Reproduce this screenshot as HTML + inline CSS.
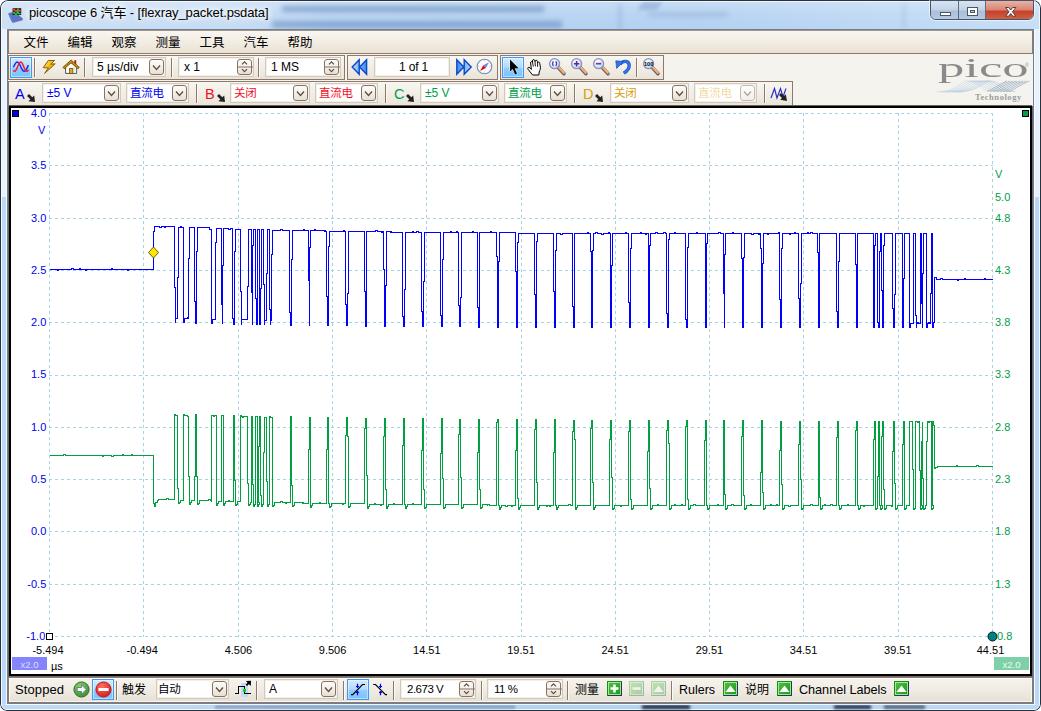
<!DOCTYPE html><html><head><meta charset="utf-8"><title>picoscope 6 汽车 - [flexray_packet.psdata]</title><style>
*{box-sizing:border-box;margin:0;padding:0}
html,body{width:1041px;height:711px;overflow:hidden;background:#fff}
body{font-family:"Liberation Sans","Noto Sans CJK SC",sans-serif;font-size:12px;color:#000;position:relative}
.abs{position:absolute}
#win{position:absolute;left:0;top:0;width:1041px;height:711px;box-shadow:inset 0 0 0 1px #27323f;border-radius:8px 8px 7px 7px;
 background:linear-gradient(180deg,rgba(255,255,255,.28) 0px,rgba(255,255,255,.08) 14px,rgba(255,255,255,0) 29px),linear-gradient(90deg,#cbdff5 0px,#c6dcf4 240px,#b6d3f2 330px,#b3d1f1 700px,#bcd7f4 860px,#c6def7 1041px);overflow:hidden}
#win:before{content:"";position:absolute;left:1px;top:1px;right:1px;bottom:1px;border:1px solid rgba(255,255,255,.75);border-radius:7px 7px 6px 6px}
#title{position:absolute;left:29px;top:4px;height:18px;line-height:18px;font-size:13px;letter-spacing:-.12px;white-space:nowrap;color:#000;
 text-shadow:0 0 6px #fff,0 0 6px #fff,0 0 9px #fff}
#client{position:absolute;left:7px;top:29px;width:1027px;height:675px;background:#f5f3ee;border:1px solid #6f7f93}
.menu{position:absolute;left:8px;top:30px;width:1025px;height:24px;background:linear-gradient(#f9f6f0,#f2ede3 50%,#e9e1d3);border:1px solid #917a6c;border-top-color:#a59586}
.mi{position:absolute;top:35px;height:16px;line-height:16px;font-size:12.5px;white-space:nowrap}
.grp{position:absolute;border:1px solid #8f786a;background:linear-gradient(#f8f6f1,#f1ede5 55%,#e9e4d8)}
.sep{position:absolute;width:2px;border-left:1px solid #8f786a;border-right:1px solid #fbfaf7}
.box{position:absolute;background:#fff;border:1px solid #d2cbbd;box-shadow:inset 0 0 0 1px #f3f0ea}
.txt{position:absolute;white-space:nowrap;font-size:12px;line-height:14px;height:14px}
.dd{position:absolute;border:1px solid #8a7263;border-radius:3px;background:linear-gradient(#fdfcfa,#f3efe8 50%,#e6e0d4)}
.dd svg{position:absolute;left:0;top:0}
.hl{position:absolute;border:1px solid #3d9bf5;box-shadow:inset 0 0 0 1px rgba(255,255,255,.45);background:linear-gradient(#d2eaff,#b2dbfd 48%,#8fcbfc 56%,#7fc1fa)}
.ic{position:absolute;overflow:visible}
.ax{position:absolute;white-space:nowrap;font-size:11px;line-height:12px;height:12px}
.axl{color:#0000f0;text-align:right;width:40px;left:6.3px}
.axr{color:#00a048;left:995px}
.axt{color:#000;text-align:center;width:60px}
</style></head><body><div id="win"><div class="abs" style="left:282px;top:6px;width:262px;height:6px;background:rgba(60,100,165,.42);filter:blur(2.5px)"></div><div class="abs" style="left:272px;top:21px;width:290px;height:7px;background:rgba(60,100,165,.40);filter:blur(2.5px)"></div><div class="abs" style="left:618px;top:3px;width:4px;height:26px;background:rgba(80,120,175,.18);filter:blur(2px)"></div><div class="abs" style="left:648px;top:12px;width:80px;height:5px;background:rgba(80,120,175,.2);filter:blur(2.5px)"></div><div class="abs" style="left:640px;top:2px;width:20px;height:8px;background:rgba(60,100,160,.25);filter:blur(2px);transform:skewX(-30deg)"></div><div class="abs" style="left:902px;top:3px;width:4px;height:26px;background:rgba(80,120,175,.12);filter:blur(2px)"></div><svg class="ic" style="left:7px;top:7px" width="18" height="18" viewBox="0 0 18 18"><path d="M1.5 6.5 L7.5 5 L15.5 11.5 L15.3 13 L6 15.5 L5.2 15 Z" fill="#5f74c4" stroke="#5a6aa8" stroke-width=".6"/><path d="M1.5 6.5 L2 8 L5.4 15.3 L6 14 Z" fill="#3f8fe0"/><rect x="5.6" y="1.2" width="8.6" height="6.8" fill="#111"/><path d="M6 3.4 q1-2 2 0 t2 0 t2-.3 t1.8 0" stroke="#f04040" stroke-width="1.6" fill="none"/><path d="M6 6.6 q1-2.4 2 0 t2-.4 l.8-2.5 l.6 2.6 q1 1 2.2-.4" stroke="#20c040" stroke-width="1.6" fill="none"/></svg><div id="title">picoscope 6 汽车 - [flexray_packet.psdata]</div><div class="abs" style="left:930px;top:0px;width:104px;height:20px;border:1px solid #44546a;border-radius:0 0 6px 6px;overflow:hidden;box-shadow:0 0 0 1px rgba(255,255,255,.55)"><div class="abs" style="left:0;top:0;width:28px;height:20px;background:linear-gradient(#d8e4f1,#c3d3e6 45%,#a9bfd8 50%,#b9cde3);border-right:1px solid #5b6b80"></div><div class="abs" style="left:28px;top:0;width:27px;height:20px;background:linear-gradient(#d8e4f1,#c3d3e6 45%,#a9bfd8 50%,#b9cde3);border-right:1px solid #5b6b80"></div><div class="abs" style="left:55px;top:0;width:48px;height:20px;background:linear-gradient(#eab2a4,#d98471 45%,#c6402b 50%,#cf5a3e 85%,#d97b5c)"></div><svg class="ic" style="left:0;top:0" width="104" height="21" viewBox="0 0 104 21"><rect x="9.5" y="11.5" width="10" height="3" fill="#fff" stroke="#4b5563" stroke-width="1"/><rect x="36.5" y="6.5" width="10" height="8" fill="#fff" stroke="#4b5563" stroke-width="1"/><rect x="39.5" y="9.5" width="4" height="2" fill="#b7c7da" stroke="#4b5563" stroke-width="1"/><path d="M74.5 6.5 h3.2 l2 2.6 l2-2.6 h3.2 l-3.5 4.3 l3.5 4.4 h-3.2 l-2-2.7 l-2 2.7 h-3.2 l3.5-4.4 Z" fill="#fff" stroke="#5a3a36" stroke-width="1"/></svg></div><div class="abs" style="left:2px;top:705px;width:1037px;height:4px;background:rgba(176,214,250,.5);border-radius:0 0 5px 5px"></div><div class="abs" style="left:215px;top:705px;width:300px;height:4px;background:rgba(95,125,170,.5);filter:blur(1.2px)"></div><div class="abs" style="left:642px;top:705px;width:48px;height:4px;background:rgba(12,24,52,.9);filter:blur(1.5px)"></div><div class="abs" style="left:834px;top:705px;width:37px;height:4px;background:rgba(16,34,70,.9);filter:blur(1.5px)"></div><div class="abs" style="left:884px;top:705px;width:41px;height:4px;background:rgba(55,72,100,.8);filter:blur(1.5px)"></div><div class="abs" style="left:2px;top:29px;width:4px;height:168px;background:rgba(255,255,255,.6)"></div><div class="abs" style="left:1035px;top:29px;width:4px;height:168px;background:rgba(255,255,255,.6)"></div><div class="abs" style="left:2px;top:197px;width:4px;height:507px;background:rgba(176,214,250,.55)"></div><div class="abs" style="left:1035px;top:197px;width:4px;height:507px;background:rgba(176,214,250,.55)"></div><div class="abs" style="left:6px;top:29px;width:1px;height:675px;background:rgba(255,255,255,.85)"></div><div class="abs" style="left:1034px;top:29px;width:1px;height:675px;background:rgba(255,255,255,.85)"></div><div id="client"></div><div class="menu"></div><div class="mi" style="left:23.5px">文件</div><div class="mi" style="left:67.5px">编辑</div><div class="mi" style="left:111.5px">观察</div><div class="mi" style="left:155.5px">测量</div><div class="mi" style="left:199.5px">工具</div><div class="mi" style="left:243.5px">汽车</div><div class="mi" style="left:287.5px">帮助</div><div class="grp" style="left:8px;top:55px;width:337px;height:25px"></div><div class="grp" style="left:347px;top:55px;width:151px;height:25px"></div><div class="grp" style="left:500px;top:55px;width:164px;height:25px"></div><div class="hl" style="left:10px;top:57px;width:22px;height:21px"></div><svg class="ic" style="left:12px;top:59px" width="18" height="17" viewBox="0 0 18 17"><polyline points="1.4,8.3 2.0,7.0 2.6,5.8 3.2,4.8 3.8,3.9 4.4,3.3 5.0,3.0 5.6,3.1 6.2,3.5 6.8,4.1 7.4,5.1 8.0,6.2 8.6,7.4 9.2,8.7 9.8,9.9 10.4,10.9 11.0,11.6 11.6,12.1 12.2,12.3 12.8,12.1 13.4,11.6 14.0,10.9 14.6,9.9 15.2,8.7 15.8,7.4 16.4,6.2" fill="none" stroke="#2828f0" stroke-width="1.5"/><polyline points="1.4,11.4 2.0,12.1 2.6,12.3 3.2,12.1 3.8,11.4 4.4,10.4 5.0,9.2 5.6,7.8 6.2,6.4 6.8,5.1 7.4,4.0 8.0,3.3 8.6,3.0 9.2,3.2 9.8,3.7 10.4,4.7 11.0,5.9 11.6,7.3 12.2,8.7 12.8,10.0 13.4,11.1 14.0,11.9 14.6,12.3 15.2,12.2 15.8,11.7 16.4,10.8" fill="none" stroke="#f02030" stroke-width="1.5"/></svg><div class="sep" style="left:34px;top:58px;height:19px"></div><svg class="ic" style="left:42px;top:59px" width="14" height="17" viewBox="0 0 14 17"><defs><linearGradient id="gl" x1="0" y1="0" x2="1" y2="1"><stop offset="0" stop-color="#fff080"/><stop offset=".5" stop-color="#f0b810"/><stop offset="1" stop-color="#b87800"/></linearGradient></defs><path d="M6.2 1.6 L12.6 1.4 L8.6 5.2 L13.2 4.8 L2.6 14.4 L6.4 8.9 L1.2 8.7 Z" fill="url(#gl)" stroke="#8a5c00" stroke-width="1"/></svg><svg class="ic" style="left:62px;top:58px" width="19" height="18" viewBox="0 0 19 18"><rect x="12.3" y="2.2" width="1.9" height="4.5" fill="#c01818"/><path d="M3.6 9 V15.4 H14.6 V9 L9.1 4.2 Z" fill="#fdfdf6" stroke="#3a4050" stroke-width=".9"/><path d="M11 9 V15 H14.2 V9 Z" fill="#d4f0e4" opacity=".7"/><path d="M1.3 10.3 L9.1 3.4 L16.9 10.3" fill="none" stroke="#7a5408" stroke-width="2.7" stroke-linejoin="miter"/><path d="M1.6 9.9 L9.1 3.3 L16.6 9.9" fill="none" stroke="#e8b828" stroke-width="1.2" stroke-dasharray="1.2 .6"/><rect x="7.4" y="10.4" width="3.4" height="5" fill="#e0a828" stroke="#7a5408" stroke-width=".8"/></svg><div class="sep" style="left:84px;top:58px;height:19px"></div><div class="box" style="left:92px;top:57px;width:74px;height:20px"></div><div class="txt" style="left:97px;top:60px;color:#000;font-size:12px">5 µs/div</div><div class="dd" style="left:149px;top:59px;width:15px;height:16px"><svg width="15" height="16" viewBox="0 0 15 16"><path d="M3.0 5.5 l3.5 4 l3.5 -4" fill="none" stroke="#5e4c40" stroke-width="1.3"/></svg></div><div class="sep" style="left:171px;top:58px;height:19px"></div><div class="box" style="left:178px;top:57px;width:76px;height:20px"></div><div class="txt" style="left:184px;top:60px;">x 1</div><div class="dd" style="left:237px;top:59px;width:15px;height:16px"><svg width="15" height="16" viewBox="0 0 15 16"><line x1="0" y1="7.0" x2="15" y2="7.0" stroke="#8a7263" stroke-width="1"/><path d="M4 4.3 l2.5 -2.5 l2.5 2.5 M4 9.2 l2.5 2.5 l2.5 -2.5" fill="none" stroke="#5e4c40" stroke-width="1.2"/></svg></div><div class="sep" style="left:258px;top:58px;height:19px"></div><div class="box" style="left:265px;top:57px;width:76px;height:20px"></div><div class="txt" style="left:271px;top:60px;">1 MS</div><div class="dd" style="left:324px;top:59px;width:15px;height:16px"><svg width="15" height="16" viewBox="0 0 15 16"><line x1="0" y1="7.0" x2="15" y2="7.0" stroke="#8a7263" stroke-width="1"/><path d="M4 4.3 l2.5 -2.5 l2.5 2.5 M4 9.2 l2.5 2.5 l2.5 -2.5" fill="none" stroke="#5e4c40" stroke-width="1.2"/></svg></div><svg class="ic" style="left:351px;top:58px" width="18" height="18" viewBox="0 0 18 18"><defs><linearGradient id="gb" x1="0" x2="1"><stop offset="0" stop-color="#b4dcff"/><stop offset="1" stop-color="#3a8cf0"/></linearGradient></defs><path d="M8.2 1.8 V16.2 L1.2 9 Z M15.6 1.8 V16.2 L8.6 9 Z" fill="url(#gb)" stroke="#0a48c8" stroke-width="1.4"/></svg><div class="box" style="left:374px;top:57px;width:76px;height:20px"></div><div class="txt" style="left:374px;top:60px;width:76px;text-align:center;padding-left:3px;letter-spacing:-.2px">1 of 1</div><svg class="ic" style="left:455px;top:58px" width="18" height="18" viewBox="0 0 18 18"><defs><linearGradient id="gb2" x1="1" x2="0"><stop offset="0" stop-color="#b4dcff"/><stop offset="1" stop-color="#3a8cf0"/></linearGradient></defs><path d="M1.8 1.8 V16.2 L8.8 9 Z M9.2 1.8 V16.2 L16.2 9 Z" fill="url(#gb2)" stroke="#0a48c8" stroke-width="1.4"/></svg><svg class="ic" style="left:476px;top:58px" width="18" height="18" viewBox="0 0 18 18"><circle cx="8.5" cy="8.5" r="7.3" fill="#fbfcfe" stroke="#7e8cac" stroke-width="1.1"/><path d="M8.5 2 v1.6 M8.5 13.4 v1.6 M2 8.5 h1.6 M13.4 8.5 h1.6" stroke="#c8ccd8" stroke-width=".8"/><path d="M13 4.2 L9.9 9.9 L7.3 7.3 Z" fill="#7c7cf8"/><path d="M4 13 L7.3 7.3 L9.9 9.9 Z" fill="#e80808"/></svg><div class="hl" style="left:502px;top:57px;width:22px;height:21px"></div><svg class="ic" style="left:507px;top:58px" width="14" height="19" viewBox="0 0 14 19"><path d="M3 1.6 V13.6 L5.8 11 L8.1 16.4 L10 15.5 L7.7 10.4 L11.6 10.2 Z" fill="#000" stroke="#fff" stroke-width=".7" paint-order="stroke"/></svg><svg class="ic" style="left:526px;top:58px" width="19" height="19" viewBox="0 0 19 19"><path d="M6.6 17 L2 11.2 C1 9.8,2.8 8.6,3.9 9.8 L5.4 11.4 L4.6 5 C4.4 3.3,6.3 3,6.6 4.6 L6.5 3 C6.3 1.2,8.5 1,8.8 2.7 L9 3.6 C9 1.8,11.3 1.8,11.4 3.6 L11.6 5 C11.7 3.6,13.6 3.7,13.7 5.2 L14.2 8 C14.8 10.5,14 12,13.2 14 L12.8 17 Z" fill="#fff" stroke="#000" stroke-width="1"/><path d="M6.6 4.6 L7.3 8.6 M9 3.6 L9.4 8.4 M11.6 5 L11.6 8.8" stroke="#000" stroke-width=".9" fill="none"/></svg><svg class="ic" style="left:548px;top:58px" width="18" height="18" viewBox="0 0 18 18"><defs><radialGradient id="lg" cx=".4" cy=".35" r=".75"><stop offset="0" stop-color="#ffffff"/><stop offset=".6" stop-color="#d4e6fa"/><stop offset="1" stop-color="#9cc0ee"/></radialGradient></defs><path d="M10 9.2 L16 15.7" stroke="#6a5c86" stroke-width="3.5" stroke-linecap="round"/><path d="M10.3 9 L15.8 15" stroke="#f4a648" stroke-width="1.9" stroke-linecap="round"/><path d="M10.7 8.7 L16 14.5" stroke="#fbd890" stroke-width=".7" stroke-linecap="round"/><circle cx="6.6" cy="5.7" r="5" fill="url(#lg)" stroke="#8e92ba" stroke-width="1.3"/><path d="M5.4 3.4 q-1.7 2.3 0 4.6 M7.8 3.4 q1.7 2.3 0 4.6" fill="none" stroke="#5838a8" stroke-width="1.2"/></svg><svg class="ic" style="left:570px;top:58px" width="18" height="18" viewBox="0 0 18 18"><defs><radialGradient id="lg" cx=".4" cy=".35" r=".75"><stop offset="0" stop-color="#ffffff"/><stop offset=".6" stop-color="#d4e6fa"/><stop offset="1" stop-color="#9cc0ee"/></radialGradient></defs><path d="M10 9.2 L16 15.7" stroke="#6a5c86" stroke-width="3.5" stroke-linecap="round"/><path d="M10.3 9 L15.8 15" stroke="#f4a648" stroke-width="1.9" stroke-linecap="round"/><path d="M10.7 8.7 L16 14.5" stroke="#fbd890" stroke-width=".7" stroke-linecap="round"/><circle cx="6.6" cy="5.7" r="5" fill="url(#lg)" stroke="#8e92ba" stroke-width="1.3"/><path d="M3.9 5.7 h5.4 M6.6 3 v5.4" stroke="#5828a0" stroke-width="1.6"/></svg><svg class="ic" style="left:592px;top:58px" width="18" height="18" viewBox="0 0 18 18"><defs><radialGradient id="lg" cx=".4" cy=".35" r=".75"><stop offset="0" stop-color="#ffffff"/><stop offset=".6" stop-color="#d4e6fa"/><stop offset="1" stop-color="#9cc0ee"/></radialGradient></defs><path d="M10 9.2 L16 15.7" stroke="#6a5c86" stroke-width="3.5" stroke-linecap="round"/><path d="M10.3 9 L15.8 15" stroke="#f4a648" stroke-width="1.9" stroke-linecap="round"/><path d="M10.7 8.7 L16 14.5" stroke="#fbd890" stroke-width=".7" stroke-linecap="round"/><circle cx="6.6" cy="5.7" r="5" fill="url(#lg)" stroke="#8e92ba" stroke-width="1.3"/><path d="M3.9 5.7 h5.4" stroke="#8030a0" stroke-width="1.7"/></svg><svg class="ic" style="left:614px;top:58px" width="18" height="18" viewBox="0 0 18 18"><path d="M6 6.4 C9 2.2,15 2.4,15.2 7.5 C15.3 11,12.5 13.5,9.8 15.2" fill="none" stroke="#1c4cc0" stroke-width="3.3"/><path d="M6 6.4 C9 2.2,15 2.4,15.2 7.5 C15.3 11,12.5 13.5,9.8 15.2" fill="none" stroke="#2f74ec" stroke-width="2.2"/><path d="M1.8 2.8 L9.6 3.6 L2.6 10.4 Z" fill="#2f74ec" stroke="#1c4cc0" stroke-width=".7"/></svg><div class="sep" style="left:636px;top:58px;height:19px"></div><svg class="ic" style="left:642px;top:58px" width="18" height="18" viewBox="0 0 18 18"><defs><radialGradient id="lg" cx=".4" cy=".35" r=".75"><stop offset="0" stop-color="#ffffff"/><stop offset=".6" stop-color="#d4e6fa"/><stop offset="1" stop-color="#9cc0ee"/></radialGradient></defs><path d="M10 9.2 L16 15.7" stroke="#6a5c86" stroke-width="3.5" stroke-linecap="round"/><path d="M10.3 9 L15.8 15" stroke="#f4a648" stroke-width="1.9" stroke-linecap="round"/><path d="M10.7 8.7 L16 14.5" stroke="#fbd890" stroke-width=".7" stroke-linecap="round"/><circle cx="6.6" cy="5.7" r="5" fill="url(#lg)" stroke="#8e92ba" stroke-width="1.3"/><text x="6.6" y="7.8" font-size="5.6" font-weight="bold" text-anchor="middle" font-family="Liberation Sans,sans-serif" fill="#000">100</text></svg><div class="grp" style="left:8px;top:81px;width:785px;height:25px;border-bottom:none"></div><div class="txt" style="left:15px;top:86px;font-size:14.5px;line-height:16px;height:16px;color:#0000f0">A</div><svg class="ic" style="left:26px;top:93px" width="10" height="10" viewBox="0 0 10 10"><path d="M1 3 L3 1 L6.3 4.3 L8.2 2.4 L9 9 L2.4 8.2 L4.3 6.3 Z" fill="#222"/></svg><div class="box" style="left:42px;top:83px;width:79px;height:20px"></div><div class="txt" style="left:47px;top:86px;color:#0000f0;font-size:12px">±5 V</div><div class="dd" style="left:104px;top:85px;width:15px;height:16px"><svg width="15" height="16" viewBox="0 0 15 16"><path d="M3.0 5.5 l3.5 4 l3.5 -4" fill="none" stroke="#5e4c40" stroke-width="1.3"/></svg></div><div class="box" style="left:126px;top:83px;width:63px;height:20px"></div><div class="txt" style="left:130px;top:86px;color:#0000f0;font-size:11.5px;letter-spacing:-.3px">直流电</div><div class="dd" style="left:172px;top:85px;width:15px;height:16px"><svg width="15" height="16" viewBox="0 0 15 16"><path d="M3.0 5.5 l3.5 4 l3.5 -4" fill="none" stroke="#5e4c40" stroke-width="1.3"/></svg></div><div class="sep" style="left:196px;top:84px;height:19px"></div><div class="txt" style="left:205px;top:86px;font-size:14.5px;line-height:16px;height:16px;color:#f01028">B</div><svg class="ic" style="left:216px;top:93px" width="10" height="10" viewBox="0 0 10 10"><path d="M1 3 L3 1 L6.3 4.3 L8.2 2.4 L9 9 L2.4 8.2 L4.3 6.3 Z" fill="#222"/></svg><div class="box" style="left:230px;top:83px;width:80px;height:20px"></div><div class="txt" style="left:234px;top:86px;color:#f01028;font-size:11.5px;letter-spacing:-.3px">关闭</div><div class="dd" style="left:293px;top:85px;width:15px;height:16px"><svg width="15" height="16" viewBox="0 0 15 16"><path d="M3.0 5.5 l3.5 4 l3.5 -4" fill="none" stroke="#5e4c40" stroke-width="1.3"/></svg></div><div class="box" style="left:315px;top:83px;width:63px;height:20px"></div><div class="txt" style="left:319px;top:86px;color:#f01028;font-size:11.5px;letter-spacing:-.3px">直流电</div><div class="dd" style="left:361px;top:85px;width:15px;height:16px"><svg width="15" height="16" viewBox="0 0 15 16"><path d="M3.0 5.5 l3.5 4 l3.5 -4" fill="none" stroke="#5e4c40" stroke-width="1.3"/></svg></div><div class="sep" style="left:385px;top:84px;height:19px"></div><div class="txt" style="left:394px;top:86px;font-size:14.5px;line-height:16px;height:16px;color:#00a048">C</div><svg class="ic" style="left:405px;top:93px" width="10" height="10" viewBox="0 0 10 10"><path d="M1 3 L3 1 L6.3 4.3 L8.2 2.4 L9 9 L2.4 8.2 L4.3 6.3 Z" fill="#222"/></svg><div class="box" style="left:420px;top:83px;width:79px;height:20px"></div><div class="txt" style="left:425px;top:86px;color:#00a048;font-size:12px">±5 V</div><div class="dd" style="left:482px;top:85px;width:15px;height:16px"><svg width="15" height="16" viewBox="0 0 15 16"><path d="M3.0 5.5 l3.5 4 l3.5 -4" fill="none" stroke="#5e4c40" stroke-width="1.3"/></svg></div><div class="box" style="left:504px;top:83px;width:63px;height:20px"></div><div class="txt" style="left:508px;top:86px;color:#00a048;font-size:11.5px;letter-spacing:-.3px">直流电</div><div class="dd" style="left:550px;top:85px;width:15px;height:16px"><svg width="15" height="16" viewBox="0 0 15 16"><path d="M3.0 5.5 l3.5 4 l3.5 -4" fill="none" stroke="#5e4c40" stroke-width="1.3"/></svg></div><div class="sep" style="left:574px;top:84px;height:19px"></div><div class="txt" style="left:583px;top:86px;font-size:14.5px;line-height:16px;height:16px;color:#d8a010">D</div><svg class="ic" style="left:594px;top:93px" width="10" height="10" viewBox="0 0 10 10"><path d="M1 3 L3 1 L6.3 4.3 L8.2 2.4 L9 9 L2.4 8.2 L4.3 6.3 Z" fill="#222"/></svg><div class="box" style="left:610px;top:83px;width:79px;height:20px"></div><div class="txt" style="left:614px;top:86px;color:#d8a010;font-size:11.5px;letter-spacing:-.3px">关闭</div><div class="dd" style="left:672px;top:85px;width:15px;height:16px"><svg width="15" height="16" viewBox="0 0 15 16"><path d="M3.0 5.5 l3.5 4 l3.5 -4" fill="none" stroke="#5e4c40" stroke-width="1.3"/></svg></div><div class="box" style="left:694px;top:83px;width:63px;height:20px"></div><div class="txt" style="left:698px;top:86px;color:#d8a010;font-size:11.5px;letter-spacing:-.3px"><span style="opacity:.4">直流电</span></div><div class="dd" style="left:740px;top:85px;width:15px;height:16px;opacity:.5"><svg width="15" height="16" viewBox="0 0 15 16"><path d="M3.0 5.5 l3.5 4 l3.5 -4" fill="none" stroke="#5e4c40" stroke-width="1.3"/></svg></div><div class="sep" style="left:764px;top:84px;height:19px"></div><svg class="ic" style="left:770px;top:86px" width="19" height="17" viewBox="0 0 19 17"><path d="M1 12 L4.5 2.5 L7 12 L10.5 2.5 L13 11 L16 2.5" fill="none" stroke="#2828c8" stroke-width="1.150"/><path d="M9 9 L11 7 L14 10 L15.8 8.2 L17 15 L10.2 13.8 L12 12 Z" fill="#222"/></svg><div class="abs" style="left:938px;top:53px;height:30px;font-family:'Liberation Serif',serif;font-size:27px;line-height:30px;color:#8a8a8a;transform:scaleX(1.95);transform-origin:0 0;white-space:nowrap">pico</div><div class="abs" style="left:1025px;top:62px;font-size:5px;line-height:6px;color:#999">®</div><svg class="ic" style="left:935px;top:80px" width="96" height="13" viewBox="0 0 96 13"><path d="M1.0 12 C12.0 11.5,18.0 9,24.0 5 S30.0 0.8,34.0 1 S42.0 4,46.0 7 S52.0 11.5,58.0 11.5" fill="none" stroke="#9fc0dc" stroke-width=".55" opacity="0.55"/><path d="M4.2 12 C15.2 11.5,21.2 9,27.2 5 S33.2 0.8,37.2 1 S45.2 4,49.2 7 S55.2 11.5,61.2 11.5" fill="none" stroke="#9fc0dc" stroke-width=".55" opacity="0.60"/><path d="M7.4 12 C18.4 11.5,24.4 9,30.4 5 S36.4 0.8,40.4 1 S48.4 4,52.4 7 S58.4 11.5,64.4 11.5" fill="none" stroke="#9fc0dc" stroke-width=".55" opacity="0.65"/><path d="M10.6 12 C21.6 11.5,27.6 9,33.6 5 S39.6 0.8,43.6 1 S51.6 4,55.6 7 S61.6 11.5,67.6 11.5" fill="none" stroke="#9fc0dc" stroke-width=".55" opacity="0.70"/><path d="M13.8 12 C24.8 11.5,30.8 9,36.8 5 S42.8 0.8,46.8 1 S54.8 4,58.8 7 S64.8 11.5,70.8 11.5" fill="none" stroke="#9fc0dc" stroke-width=".55" opacity="0.75"/><path d="M17.0 12 C28.0 11.5,34.0 9,40.0 5 S46.0 0.8,50.0 1 S58.0 4,62.0 7 S68.0 11.5,74.0 11.5" fill="none" stroke="#9fc0dc" stroke-width=".55" opacity="0.80"/><path d="M20.2 12 C31.2 11.5,37.2 9,43.2 5 S49.2 0.8,53.2 1 S61.2 4,65.2 7 S71.2 11.5,77.2 11.5" fill="none" stroke="#9fc0dc" stroke-width=".55" opacity="0.85"/><path d="M23.4 12 C34.4 11.5,40.4 9,46.4 5 S52.4 0.8,56.4 1 S64.4 4,68.4 7 S74.4 11.5,80.4 11.5" fill="none" stroke="#9fc0dc" stroke-width=".55" opacity="0.90"/><path d="M52.0 11.5 C58.0 9,64.0 4,72.0 1" fill="none" stroke="#7f98b4" stroke-width=".6"/><path d="M55.2 11.5 C61.2 9,67.2 4,75.2 1" fill="none" stroke="#7f98b4" stroke-width=".6"/><path d="M58.4 11.5 C64.4 9,70.4 4,78.4 1" fill="none" stroke="#7f98b4" stroke-width=".6"/><path d="M61.6 11.5 C67.6 9,73.6 4,81.6 1" fill="none" stroke="#7f98b4" stroke-width=".6"/><path d="M64.8 11.5 C70.8 9,76.8 4,84.8 1" fill="none" stroke="#7f98b4" stroke-width=".6"/><path d="M68.0 11.5 C74.0 9,80.0 4,88.0 1" fill="none" stroke="#7f98b4" stroke-width=".6"/><path d="M71.2 11.5 C77.2 9,83.2 4,91.2 1" fill="none" stroke="#7f98b4" stroke-width=".6"/><path d="M74.4 11.5 C80.4 9,86.4 4,94.4 1" fill="none" stroke="#7f98b4" stroke-width=".6"/></svg><div class="abs" style="left:975px;top:92px;font-family:'Liberation Serif',serif;font-size:8.5px;line-height:10px;color:#9c9c9c;letter-spacing:.55px;font-weight:bold">Technology</div><div class="abs" style="left:9px;top:106px;width:1023px;height:570px;background:#fff;border:2px solid #000"></div><svg class="ic" style="left:0;top:0" width="1041" height="711" viewBox="0 0 1041 711"><g stroke="#a6d2e4" stroke-width="1" stroke-dasharray="3 3" shape-rendering="crispEdges" fill="none"><line x1="49.5" y1="113" x2="49.5" y2="637"/><line x1="143.5" y1="113" x2="143.5" y2="637"/><line x1="238.5" y1="113" x2="238.5" y2="637"/><line x1="332.5" y1="113" x2="332.5" y2="637"/><line x1="426.5" y1="113" x2="426.5" y2="637"/><line x1="521.5" y1="113" x2="521.5" y2="637"/><line x1="615.5" y1="113" x2="615.5" y2="637"/><line x1="709.5" y1="113" x2="709.5" y2="637"/><line x1="803.5" y1="113" x2="803.5" y2="637"/><line x1="898.5" y1="113" x2="898.5" y2="637"/><line x1="992.5" y1="113" x2="992.5" y2="637"/><line x1="49" y1="113.5" x2="993" y2="113.5"/><line x1="49" y1="165.5" x2="993" y2="165.5"/><line x1="49" y1="218.5" x2="993" y2="218.5"/><line x1="49" y1="270.5" x2="993" y2="270.5"/><line x1="49" y1="322.5" x2="993" y2="322.5"/><line x1="49" y1="375.5" x2="993" y2="375.5"/><line x1="49" y1="427.5" x2="993" y2="427.5"/><line x1="49" y1="479.5" x2="993" y2="479.5"/><line x1="49" y1="531.5" x2="993" y2="531.5"/><line x1="49" y1="584.5" x2="993" y2="584.5"/><line x1="49" y1="636.5" x2="993" y2="636.5"/></g><polyline fill="none" stroke="#0000ff" stroke-width="1" stroke-linejoin="miter" shape-rendering="crispEdges" points="49.5,269.5 57.5,269.5 57.5,270.5 58.5,270.5 58.5,269.5 71.5,269.5 71.5,268.5 73.5,268.5 73.5,269.5 79.5,269.5 79.5,268.5 80.5,268.5 80.5,269.5 85.5,269.5 85.5,270.5 86.5,270.5 86.5,269.5 111.5,269.5 111.5,268.5 112.5,268.5 112.5,269.5 127.5,269.5 127.5,270.5 128.5,270.5 128.5,269.5 153.5,269.5 153.5,231.5 154.5,231.5 154.5,226.5 159.5,226.5 159.5,227.5 161.5,227.5 161.5,226.5 164.5,226.5 164.5,227.5 165.5,227.5 165.5,226.5 174.5,226.5 174.5,287.5 175.5,287.5 175.5,322.5 175.5,318.5 177.5,318.5 177.5,277.5 178.5,277.5 178.5,227.5 180.5,227.5 180.5,226.5 181.5,226.5 181.5,227.5 183.5,227.5 183.5,322.5 184.5,322.5 184.5,318.5 187.5,318.5 187.5,317.5 188.5,317.5 188.5,318.5 188.5,258.5 189.5,258.5 189.5,227.5 194.5,227.5 194.5,301.5 195.5,301.5 195.5,323.5 196.5,323.5 196.5,251.5 197.5,251.5 197.5,227.5 209.5,227.5 209.5,229.5 211.5,229.5 211.5,228.5 211.5,323.5 212.5,323.5 212.5,319.5 215.5,319.5 215.5,242.5 216.5,242.5 216.5,228.5 221.5,228.5 221.5,304.5 222.5,304.5 222.5,323.5 222.5,265.5 223.5,265.5 223.5,228.5 228.5,228.5 228.5,229.5 230.5,229.5 230.5,228.5 232.5,228.5 232.5,318.5 233.5,318.5 233.5,324.5 234.5,324.5 234.5,251.5 235.5,251.5 235.5,229.5 240.5,229.5 240.5,291.5 241.5,291.5 241.5,324.5 241.5,319.5 247.5,319.5 247.5,286.5 248.5,286.5 248.5,229.5 251.5,229.5 251.5,292.5 252.5,292.5 252.5,324.5 252.5,245.5 253.5,245.5 253.5,229.5 255.5,229.5 255.5,298.5 256.5,298.5 256.5,324.5 257.5,324.5 257.5,229.5 259.5,229.5 259.5,324.5 260.5,324.5 260.5,288.5 261.5,288.5 261.5,229.5 263.5,229.5 263.5,284.5 264.5,284.5 264.5,324.5 264.5,320.5 266.5,320.5 266.5,273.5 267.5,273.5 267.5,229.5 269.5,229.5 269.5,309.5 270.5,309.5 270.5,324.5 270.5,320.5 271.5,320.5 271.5,254.5 272.5,254.5 272.5,230.5 280.5,230.5 280.5,229.5 282.5,229.5 282.5,230.5 289.5,230.5 289.5,312.5 290.5,312.5 290.5,325.5 291.5,325.5 291.5,259.5 292.5,259.5 292.5,230.5 303.5,230.5 303.5,229.5 304.5,229.5 304.5,230.5 308.5,230.5 308.5,280.5 309.5,280.5 309.5,325.5 309.5,247.5 310.5,247.5 310.5,230.5 314.5,230.5 314.5,229.5 315.5,229.5 315.5,230.5 324.5,230.5 324.5,231.5 324.5,230.5 325.5,230.5 325.5,231.5 326.5,231.5 326.5,296.5 327.5,296.5 327.5,325.5 328.5,325.5 328.5,246.5 329.5,246.5 329.5,231.5 343.5,231.5 343.5,230.5 344.5,230.5 344.5,231.5 345.5,231.5 345.5,304.5 346.5,304.5 346.5,325.5 347.5,325.5 347.5,293.5 348.5,293.5 348.5,231.5 364.5,231.5 364.5,291.5 365.5,291.5 365.5,326.5 366.5,326.5 366.5,231.5 375.5,231.5 375.5,230.5 377.5,230.5 377.5,231.5 381.5,231.5 381.5,232.5 382.5,232.5 382.5,231.5 383.5,231.5 383.5,269.5 384.5,269.5 384.5,326.5 385.5,326.5 385.5,285.5 386.5,285.5 386.5,231.5 390.5,231.5 390.5,232.5 390.5,231.5 391.5,231.5 391.5,232.5 402.5,232.5 402.5,316.5 403.5,316.5 403.5,326.5 404.5,326.5 404.5,289.5 405.5,289.5 405.5,232.5 412.5,232.5 412.5,231.5 413.5,231.5 413.5,232.5 416.5,232.5 416.5,231.5 418.5,231.5 418.5,232.5 421.5,232.5 421.5,311.5 422.5,311.5 422.5,326.5 423.5,326.5 423.5,281.5 424.5,281.5 424.5,232.5 440.5,232.5 440.5,315.5 441.5,315.5 441.5,326.5 442.5,326.5 442.5,259.5 443.5,259.5 443.5,232.5 450.5,232.5 450.5,231.5 451.5,231.5 451.5,232.5 456.5,232.5 456.5,231.5 457.5,231.5 457.5,232.5 458.5,232.5 458.5,305.5 459.5,305.5 459.5,326.5 460.5,326.5 460.5,297.5 461.5,297.5 461.5,232.5 472.5,232.5 472.5,231.5 473.5,231.5 473.5,232.5 477.5,232.5 477.5,307.5 478.5,307.5 478.5,327.5 479.5,327.5 479.5,232.5 490.5,232.5 490.5,231.5 491.5,231.5 491.5,232.5 496.5,232.5 496.5,256.5 497.5,256.5 497.5,327.5 498.5,327.5 498.5,261.5 499.5,261.5 499.5,232.5 515.5,232.5 515.5,271.5 516.5,271.5 516.5,327.5 517.5,327.5 517.5,242.5 518.5,242.5 518.5,233.5 534.5,233.5 534.5,294.5 535.5,294.5 535.5,327.5 536.5,327.5 536.5,241.5 537.5,241.5 537.5,233.5 553.5,233.5 553.5,291.5 554.5,291.5 554.5,327.5 555.5,327.5 555.5,250.5 556.5,250.5 556.5,233.5 560.5,233.5 560.5,234.5 562.5,234.5 562.5,233.5 572.5,233.5 572.5,306.5 573.5,306.5 573.5,327.5 574.5,327.5 574.5,233.5 587.5,233.5 587.5,232.5 588.5,232.5 588.5,233.5 590.5,233.5 590.5,251.5 591.5,251.5 591.5,327.5 592.5,327.5 592.5,250.5 593.5,250.5 593.5,233.5 595.5,233.5 595.5,232.5 597.5,232.5 597.5,233.5 601.5,233.5 601.5,234.5 603.5,234.5 603.5,233.5 608.5,233.5 608.5,232.5 609.5,232.5 609.5,233.5 610.5,233.5 610.5,327.5 611.5,327.5 611.5,265.5 612.5,265.5 612.5,233.5 625.5,233.5 625.5,232.5 626.5,232.5 626.5,233.5 628.5,233.5 628.5,302.5 629.5,302.5 629.5,327.5 630.5,327.5 630.5,248.5 631.5,248.5 631.5,233.5 640.5,233.5 640.5,232.5 641.5,232.5 641.5,233.5 645.5,233.5 645.5,234.5 646.5,234.5 646.5,233.5 648.5,233.5 648.5,327.5 649.5,327.5 649.5,245.5 650.5,245.5 650.5,233.5 655.5,233.5 655.5,232.5 657.5,232.5 657.5,233.5 663.5,233.5 663.5,232.5 665.5,232.5 665.5,233.5 666.5,233.5 666.5,313.5 667.5,313.5 667.5,327.5 668.5,327.5 668.5,239.5 669.5,239.5 669.5,233.5 674.5,233.5 674.5,232.5 675.5,232.5 675.5,233.5 685.5,233.5 685.5,319.5 686.5,319.5 686.5,327.5 687.5,327.5 687.5,247.5 688.5,247.5 688.5,233.5 696.5,233.5 696.5,232.5 697.5,232.5 697.5,233.5 705.5,233.5 705.5,327.5 706.5,327.5 706.5,243.5 707.5,243.5 707.5,233.5 718.5,233.5 718.5,232.5 720.5,232.5 720.5,233.5 723.5,233.5 723.5,293.5 724.5,293.5 724.5,327.5 724.5,254.5 725.5,254.5 725.5,233.5 732.5,233.5 732.5,232.5 733.5,232.5 733.5,233.5 741.5,233.5 741.5,258.5 742.5,258.5 742.5,327.5 743.5,327.5 743.5,257.5 744.5,257.5 744.5,233.5 751.5,233.5 751.5,234.5 753.5,234.5 753.5,233.5 758.5,233.5 758.5,234.5 759.5,234.5 759.5,233.5 760.5,233.5 760.5,248.5 761.5,248.5 761.5,327.5 762.5,327.5 762.5,263.5 763.5,263.5 763.5,233.5 767.5,233.5 767.5,234.5 768.5,234.5 768.5,233.5 778.5,233.5 778.5,232.5 779.5,232.5 779.5,299.5 780.5,299.5 780.5,327.5 781.5,327.5 781.5,248.5 782.5,248.5 782.5,233.5 789.5,233.5 789.5,234.5 790.5,234.5 790.5,233.5 794.5,233.5 794.5,232.5 795.5,232.5 795.5,233.5 798.5,233.5 798.5,298.5 799.5,298.5 799.5,327.5 800.5,327.5 800.5,283.5 801.5,283.5 801.5,233.5 807.5,233.5 807.5,232.5 808.5,232.5 808.5,233.5 810.5,233.5 810.5,232.5 812.5,232.5 812.5,233.5 817.5,233.5 817.5,252.5 818.5,252.5 818.5,327.5 819.5,327.5 819.5,233.5 836.5,233.5 836.5,311.5 837.5,311.5 837.5,327.5 838.5,327.5 838.5,261.5 839.5,261.5 839.5,233.5 855.5,233.5 855.5,264.5 856.5,264.5 856.5,327.5 857.5,327.5 857.5,233.5 873.5,233.5 873.5,327.5 874.5,327.5 874.5,245.5 875.5,245.5 875.5,233.5 877.5,233.5 877.5,322.5 878.5,322.5 878.5,327.5 879.5,327.5 879.5,251.5 880.5,251.5 880.5,233.5 881.5,233.5 881.5,290.5 882.5,290.5 882.5,327.5 883.5,327.5 883.5,245.5 884.5,245.5 884.5,233.5 892.5,233.5 892.5,308.5 893.5,308.5 893.5,327.5 894.5,327.5 894.5,294.5 895.5,294.5 895.5,233.5 902.5,233.5 902.5,327.5 903.5,327.5 903.5,278.5 904.5,278.5 904.5,233.5 909.5,233.5 909.5,327.5 910.5,327.5 910.5,323.5 913.5,323.5 913.5,233.5 915.5,233.5 915.5,315.5 916.5,315.5 916.5,327.5 916.5,323.5 917.5,323.5 917.5,322.5 918.5,322.5 918.5,323.5 920.5,323.5 920.5,233.5 921.5,233.5 921.5,303.5 922.5,303.5 922.5,327.5 922.5,273.5 923.5,273.5 923.5,233.5 926.5,233.5 926.5,327.5 927.5,327.5 927.5,323.5 928.5,323.5 928.5,322.5 929.5,322.5 929.5,323.5 930.5,323.5 930.5,293.5 931.5,293.5 931.5,233.5 932.5,233.5 932.5,327.5 933.5,327.5 933.5,322.5 934.5,322.5 934.5,277.5 936.5,277.5 936.5,279.5 940.5,279.5 940.5,278.5 942.5,278.5 942.5,279.5 957.5,279.5 957.5,280.5 958.5,280.5 958.5,279.5 964.5,279.5 964.5,278.5 965.5,278.5 965.5,279.5 984.5,279.5 984.5,278.5 985.5,278.5 985.5,279.5 992.5,279.5"/><polyline fill="none" stroke="#00a040" stroke-width="1" stroke-linejoin="miter" shape-rendering="crispEdges" points="49.5,455.5 63.5,455.5 63.5,454.5 65.5,454.5 65.5,455.5 102.5,455.5 102.5,456.5 103.5,456.5 103.5,455.5 111.5,455.5 111.5,456.5 113.5,456.5 113.5,455.5 122.5,455.5 122.5,454.5 123.5,454.5 123.5,455.5 131.5,455.5 131.5,454.5 132.5,454.5 132.5,455.5 153.5,455.5 153.5,503.5 154.5,503.5 154.5,506.5 155.5,506.5 155.5,502.5 157.5,502.5 157.5,500.5 158.5,500.5 158.5,499.5 166.5,499.5 166.5,498.5 168.5,498.5 168.5,499.5 174.5,499.5 174.5,414.5 175.5,414.5 175.5,415.5 177.5,415.5 177.5,488.5 178.5,488.5 178.5,503.5 179.5,503.5 179.5,502.5 180.5,502.5 180.5,500.5 183.5,500.5 183.5,414.5 184.5,414.5 184.5,415.5 187.5,415.5 187.5,416.5 188.5,416.5 188.5,415.5 188.5,476.5 189.5,476.5 189.5,504.5 190.5,504.5 190.5,502.5 191.5,502.5 191.5,500.5 194.5,500.5 194.5,476.5 195.5,476.5 195.5,414.5 196.5,414.5 196.5,476.5 197.5,476.5 197.5,504.5 198.5,504.5 198.5,503.5 199.5,503.5 199.5,500.5 208.5,500.5 208.5,499.5 210.5,499.5 210.5,500.5 211.5,500.5 211.5,501.5 211.5,415.5 213.5,415.5 213.5,416.5 214.5,416.5 214.5,415.5 216.5,415.5 216.5,505.5 217.5,505.5 217.5,503.5 218.5,503.5 218.5,501.5 221.5,501.5 221.5,415.5 223.5,415.5 223.5,505.5 224.5,505.5 224.5,503.5 225.5,503.5 225.5,501.5 228.5,501.5 228.5,500.5 229.5,500.5 229.5,501.5 233.5,501.5 233.5,415.5 234.5,415.5 234.5,480.5 235.5,480.5 235.5,505.5 236.5,505.5 236.5,504.5 237.5,504.5 237.5,501.5 240.5,501.5 240.5,415.5 241.5,415.5 241.5,416.5 242.5,416.5 242.5,417.5 243.5,417.5 243.5,416.5 247.5,416.5 247.5,483.5 248.5,483.5 248.5,505.5 249.5,505.5 249.5,504.5 250.5,504.5 250.5,502.5 251.5,502.5 251.5,416.5 252.5,416.5 252.5,484.5 253.5,484.5 253.5,506.5 254.5,506.5 254.5,504.5 255.5,504.5 255.5,416.5 257.5,416.5 257.5,506.5 258.5,506.5 258.5,504.5 259.5,504.5 259.5,502.5 258.5,502.5 258.5,446.5 259.5,446.5 259.5,416.5 260.5,416.5 260.5,495.5 261.5,495.5 261.5,506.5 262.5,506.5 262.5,504.5 263.5,504.5 263.5,502.5 262.5,502.5 263.5,502.5 263.5,452.5 264.5,452.5 264.5,416.5 264.5,417.5 266.5,417.5 266.5,481.5 267.5,481.5 267.5,506.5 268.5,506.5 268.5,504.5 269.5,504.5 269.5,502.5 268.5,502.5 269.5,502.5 269.5,416.5 270.5,416.5 270.5,417.5 272.5,417.5 272.5,506.5 273.5,506.5 273.5,505.5 274.5,505.5 274.5,502.5 280.5,502.5 280.5,501.5 282.5,501.5 282.5,502.5 285.5,502.5 285.5,503.5 286.5,503.5 286.5,502.5 290.5,502.5 290.5,416.5 291.5,416.5 291.5,485.5 292.5,485.5 292.5,506.5 293.5,506.5 293.5,505.5 294.5,505.5 294.5,502.5 302.5,502.5 302.5,503.5 302.5,502.5 303.5,502.5 303.5,503.5 308.5,503.5 308.5,449.5 309.5,449.5 309.5,417.5 310.5,417.5 310.5,507.5 311.5,507.5 311.5,505.5 312.5,505.5 312.5,503.5 319.5,503.5 319.5,502.5 320.5,502.5 320.5,503.5 326.5,503.5 326.5,449.5 327.5,449.5 327.5,417.5 328.5,417.5 328.5,503.5 329.5,503.5 329.5,507.5 330.5,507.5 330.5,506.5 331.5,506.5 331.5,503.5 342.5,503.5 342.5,504.5 343.5,504.5 343.5,503.5 345.5,503.5 345.5,435.5 346.5,435.5 346.5,417.5 347.5,417.5 347.5,436.5 348.5,436.5 348.5,507.5 349.5,507.5 349.5,506.5 350.5,506.5 350.5,503.5 364.5,503.5 364.5,428.5 365.5,428.5 365.5,418.5 366.5,418.5 366.5,475.5 367.5,475.5 367.5,508.5 368.5,508.5 368.5,506.5 369.5,506.5 369.5,504.5 374.5,504.5 374.5,503.5 375.5,503.5 375.5,504.5 380.5,504.5 380.5,505.5 381.5,505.5 381.5,504.5 383.5,504.5 383.5,436.5 384.5,436.5 384.5,418.5 385.5,418.5 385.5,489.5 386.5,489.5 386.5,508.5 387.5,508.5 387.5,506.5 388.5,506.5 388.5,504.5 393.5,504.5 393.5,503.5 394.5,503.5 394.5,504.5 402.5,504.5 402.5,445.5 403.5,445.5 403.5,418.5 404.5,418.5 404.5,504.5 405.5,504.5 405.5,508.5 406.5,508.5 406.5,506.5 407.5,506.5 407.5,504.5 412.5,504.5 412.5,503.5 413.5,503.5 413.5,504.5 421.5,504.5 421.5,450.5 422.5,450.5 422.5,418.5 423.5,418.5 423.5,489.5 424.5,489.5 424.5,508.5 425.5,508.5 425.5,507.5 426.5,507.5 426.5,504.5 440.5,504.5 440.5,453.5 441.5,453.5 441.5,418.5 442.5,418.5 442.5,478.5 443.5,478.5 443.5,508.5 444.5,508.5 444.5,507.5 445.5,507.5 445.5,504.5 458.5,504.5 458.5,434.5 459.5,434.5 459.5,419.5 460.5,419.5 460.5,477.5 461.5,477.5 461.5,508.5 462.5,508.5 462.5,507.5 463.5,507.5 463.5,504.5 477.5,504.5 477.5,452.5 478.5,452.5 478.5,419.5 479.5,419.5 479.5,489.5 480.5,489.5 480.5,508.5 481.5,508.5 481.5,507.5 482.5,507.5 482.5,504.5 487.5,504.5 487.5,505.5 487.5,504.5 489.5,504.5 489.5,505.5 496.5,505.5 496.5,422.5 497.5,422.5 497.5,419.5 498.5,419.5 498.5,505.5 499.5,505.5 499.5,509.5 500.5,509.5 500.5,507.5 501.5,507.5 501.5,505.5 505.5,505.5 505.5,506.5 507.5,506.5 507.5,505.5 511.5,505.5 511.5,506.5 512.5,506.5 512.5,505.5 515.5,505.5 515.5,450.5 516.5,450.5 516.5,419.5 517.5,419.5 517.5,498.5 518.5,498.5 518.5,509.5 519.5,509.5 519.5,507.5 520.5,507.5 520.5,505.5 534.5,505.5 534.5,429.5 535.5,429.5 535.5,419.5 536.5,419.5 536.5,482.5 537.5,482.5 537.5,509.5 538.5,509.5 538.5,507.5 539.5,507.5 539.5,505.5 546.5,505.5 546.5,506.5 547.5,506.5 547.5,505.5 549.5,505.5 549.5,506.5 550.5,506.5 550.5,505.5 553.5,505.5 553.5,452.5 554.5,452.5 554.5,419.5 555.5,419.5 555.5,505.5 556.5,505.5 556.5,509.5 557.5,509.5 557.5,507.5 558.5,507.5 558.5,505.5 568.5,505.5 568.5,504.5 570.5,504.5 570.5,505.5 572.5,505.5 572.5,431.5 573.5,431.5 573.5,420.5 574.5,420.5 574.5,439.5 575.5,439.5 575.5,509.5 576.5,509.5 576.5,507.5 577.5,507.5 577.5,505.5 590.5,505.5 590.5,428.5 591.5,428.5 591.5,420.5 592.5,420.5 592.5,482.5 593.5,482.5 593.5,509.5 594.5,509.5 594.5,507.5 595.5,507.5 595.5,505.5 609.5,505.5 609.5,439.5 610.5,439.5 610.5,420.5 611.5,420.5 611.5,477.5 612.5,477.5 612.5,509.5 613.5,509.5 613.5,508.5 614.5,508.5 614.5,505.5 620.5,505.5 620.5,506.5 621.5,506.5 621.5,505.5 628.5,505.5 628.5,431.5 629.5,431.5 629.5,420.5 630.5,420.5 630.5,499.5 631.5,499.5 631.5,509.5 632.5,509.5 632.5,508.5 633.5,508.5 633.5,505.5 647.5,505.5 647.5,451.5 648.5,451.5 648.5,420.5 649.5,420.5 649.5,488.5 650.5,488.5 650.5,509.5 651.5,509.5 651.5,508.5 652.5,508.5 652.5,505.5 657.5,505.5 657.5,504.5 658.5,504.5 658.5,505.5 666.5,505.5 666.5,430.5 667.5,430.5 667.5,420.5 668.5,420.5 668.5,443.5 669.5,443.5 669.5,509.5 670.5,509.5 670.5,508.5 671.5,508.5 671.5,505.5 674.5,505.5 674.5,504.5 675.5,504.5 675.5,505.5 681.5,505.5 681.5,504.5 682.5,504.5 682.5,505.5 685.5,505.5 685.5,426.5 686.5,426.5 686.5,420.5 687.5,420.5 687.5,499.5 688.5,499.5 688.5,509.5 689.5,509.5 689.5,508.5 690.5,508.5 690.5,505.5 693.5,505.5 693.5,504.5 695.5,504.5 695.5,505.5 704.5,505.5 704.5,440.5 705.5,440.5 705.5,420.5 706.5,420.5 706.5,505.5 707.5,505.5 707.5,509.5 708.5,509.5 708.5,508.5 709.5,508.5 709.5,505.5 717.5,505.5 717.5,504.5 718.5,504.5 718.5,505.5 723.5,505.5 723.5,420.5 724.5,420.5 724.5,494.5 725.5,494.5 725.5,509.5 726.5,509.5 726.5,508.5 727.5,508.5 727.5,505.5 731.5,505.5 731.5,504.5 733.5,504.5 733.5,505.5 741.5,505.5 741.5,436.5 742.5,436.5 742.5,420.5 743.5,420.5 743.5,495.5 744.5,495.5 744.5,509.5 745.5,509.5 745.5,508.5 746.5,508.5 746.5,505.5 750.5,505.5 750.5,504.5 751.5,504.5 751.5,505.5 760.5,505.5 760.5,472.5 761.5,472.5 761.5,420.5 762.5,420.5 762.5,492.5 763.5,492.5 763.5,509.5 764.5,509.5 764.5,508.5 765.5,508.5 765.5,505.5 770.5,505.5 770.5,504.5 771.5,504.5 771.5,505.5 776.5,505.5 776.5,504.5 777.5,504.5 777.5,505.5 779.5,505.5 779.5,450.5 780.5,450.5 780.5,421.5 781.5,421.5 781.5,484.5 782.5,484.5 782.5,509.5 783.5,509.5 783.5,508.5 784.5,508.5 784.5,505.5 788.5,505.5 788.5,506.5 790.5,506.5 790.5,505.5 798.5,505.5 798.5,444.5 799.5,444.5 799.5,421.5 800.5,421.5 800.5,479.5 801.5,479.5 801.5,509.5 802.5,509.5 802.5,508.5 803.5,508.5 803.5,505.5 810.5,505.5 810.5,504.5 812.5,504.5 812.5,505.5 818.5,505.5 818.5,421.5 819.5,421.5 819.5,497.5 820.5,497.5 820.5,509.5 821.5,509.5 821.5,508.5 822.5,508.5 822.5,505.5 824.5,505.5 824.5,504.5 825.5,504.5 825.5,505.5 830.5,505.5 830.5,504.5 832.5,504.5 832.5,505.5 836.5,505.5 836.5,437.5 837.5,437.5 837.5,421.5 838.5,421.5 838.5,505.5 839.5,505.5 839.5,509.5 840.5,509.5 840.5,508.5 841.5,508.5 841.5,505.5 847.5,505.5 847.5,504.5 848.5,504.5 848.5,505.5 855.5,505.5 855.5,430.5 856.5,430.5 856.5,421.5 857.5,421.5 857.5,505.5 858.5,505.5 858.5,509.5 859.5,509.5 859.5,508.5 860.5,508.5 860.5,505.5 863.5,505.5 863.5,506.5 864.5,506.5 864.5,505.5 873.5,505.5 873.5,439.5 874.5,439.5 874.5,421.5 875.5,421.5 875.5,509.5 876.5,509.5 876.5,508.5 877.5,508.5 877.5,476.5 878.5,476.5 878.5,421.5 879.5,421.5 879.5,505.5 880.5,505.5 880.5,509.5 881.5,509.5 881.5,508.5 882.5,508.5 882.5,505.5 881.5,505.5 881.5,436.5 882.5,436.5 882.5,421.5 883.5,421.5 883.5,489.5 884.5,489.5 884.5,509.5 885.5,509.5 885.5,508.5 886.5,508.5 886.5,505.5 891.5,505.5 891.5,506.5 892.5,506.5 892.5,451.5 893.5,451.5 893.5,421.5 894.5,421.5 894.5,483.5 895.5,483.5 895.5,509.5 896.5,509.5 896.5,508.5 897.5,508.5 897.5,505.5 902.5,505.5 902.5,444.5 903.5,444.5 903.5,421.5 904.5,421.5 904.5,509.5 905.5,509.5 905.5,508.5 906.5,508.5 906.5,505.5 909.5,505.5 909.5,421.5 912.5,421.5 912.5,469.5 913.5,469.5 913.5,509.5 914.5,509.5 914.5,508.5 915.5,508.5 915.5,421.5 917.5,421.5 917.5,422.5 918.5,422.5 918.5,421.5 919.5,421.5 919.5,470.5 920.5,470.5 920.5,509.5 921.5,509.5 921.5,508.5 922.5,508.5 922.5,505.5 921.5,505.5 921.5,441.5 922.5,441.5 922.5,421.5 922.5,478.5 923.5,478.5 923.5,509.5 924.5,509.5 924.5,508.5 925.5,508.5 925.5,505.5 926.5,505.5 926.5,441.5 927.5,441.5 927.5,421.5 928.5,421.5 928.5,422.5 929.5,422.5 929.5,421.5 931.5,421.5 931.5,509.5 932.5,509.5 932.5,508.5 933.5,508.5 933.5,505.5 932.5,505.5 932.5,421.5 933.5,421.5 933.5,425.5 934.5,425.5 934.5,468.5 935.5,468.5 935.5,467.5 937.5,467.5 937.5,466.5 956.5,466.5 956.5,465.5 957.5,465.5 957.5,466.5 976.5,466.5 976.5,465.5 978.5,465.5 978.5,466.5 992.5,466.5"/><path d="M153.5 247 L158.5 252.5 L153.5 258 L148.5 252.5 Z" fill="#ffe800" stroke="#6a5a00" stroke-width="1"/><rect x="12.5" y="110.5" width="6" height="6" fill="#0000f0" stroke="#000" stroke-width="1"/><rect x="1022.5" y="110.5" width="6" height="6" fill="#00a048" stroke="#000" stroke-width="1"/><rect x="46.5" y="633.5" width="6" height="6" fill="#fff" stroke="#000" stroke-width="1"/><circle cx="992.5" cy="636.5" r="4.5" fill="#008080" stroke="#002020" stroke-width="1"/></svg><div class="ax axl" style="top:107px;width:40px">4.0</div><div class="ax axl" style="top:159px;width:40px">3.5</div><div class="ax axl" style="top:212px;width:40px">3.0</div><div class="ax axl" style="top:264px;width:40px">2.5</div><div class="ax axl" style="top:316px;width:40px">2.0</div><div class="ax axl" style="top:368px;width:40px">1.5</div><div class="ax axl" style="top:421px;width:40px">1.0</div><div class="ax axl" style="top:473px;width:40px">0.5</div><div class="ax axl" style="top:525px;width:40px">0.0</div><div class="ax axl" style="top:578px;width:40px">-0.5</div><div class="ax axl" style="top:630px;width:39px">-1.0</div><div class="ax axl" style="top:124px;width:39px">V</div><div class="ax axr" style="top:212px;left:995px">4.8</div><div class="ax axr" style="top:264px;left:995px">4.3</div><div class="ax axr" style="top:316px;left:995px">3.8</div><div class="ax axr" style="top:368px;left:995px">3.3</div><div class="ax axr" style="top:421px;left:995px">2.8</div><div class="ax axr" style="top:473px;left:995px">2.3</div><div class="ax axr" style="top:525px;left:995px">1.8</div><div class="ax axr" style="top:578px;left:995px">1.3</div><div class="ax axr" style="top:630px;left:997px">0.8</div><div class="ax axr" style="top:168px">V</div><div class="ax axr" style="top:191px">5.0</div><div class="ax axt" style="top:644px;left:18.0px">-5.494</div><div class="ax axt" style="top:644px;left:112.2px">-0.494</div><div class="ax axt" style="top:644px;left:208.4px">4.506</div><div class="ax axt" style="top:644px;left:302.6px">9.506</div><div class="ax axt" style="top:644px;left:396.8px">14.51</div><div class="ax axt" style="top:644px;left:491.0px">19.51</div><div class="ax axt" style="top:644px;left:585.2px">24.51</div><div class="ax axt" style="top:644px;left:679.4px">29.51</div><div class="ax axt" style="top:644px;left:773.6px">34.51</div><div class="ax axt" style="top:644px;left:867.8px">39.51</div><div class="ax axt" style="top:644px;left:960.5px">44.51</div><div class="abs" style="left:12px;top:657px;width:35px;height:13px;background:#8484fb;color:#dcdcff;font-size:9.5px;line-height:15px;text-align:center">x2.0</div><div class="ax" style="left:51px;top:660px;color:#000">µs</div><div class="abs" style="left:994px;top:657px;width:35px;height:13px;background:#7fd0a8;color:#e6fff0;font-size:9.5px;line-height:15px;text-align:center">x2.0</div><div class="abs" style="left:9px;top:676px;width:1023px;height:1px;background:#6c6c6c"></div><div class="abs" style="left:8px;top:106px;width:1px;height:571px;background:#686868"></div><div class="abs" style="left:1032px;top:106px;width:1px;height:571px;background:#686868"></div><div class="abs" style="left:9px;top:105px;width:1023px;height:1px;background:#6a625c"></div><div class="abs" style="left:6px;top:704px;width:1029px;height:1px;background:rgba(255,255,255,.85)"></div><div class="grp" style="left:8px;top:677px;width:1025px;height:26px;box-shadow:inset 1px 1px 0 #fdfcfa,inset -1px -1px 0 #f8f6f1;background:linear-gradient(#f6f3ee,#efebe3 55%,#e6e0d4)"></div><div class="txt" style="left:15px;top:683px;font-size:13px;letter-spacing:.1px">Stopped</div><svg class="ic" style="left:73px;top:681px" width="17" height="17" viewBox="0 0 17 17"><defs><radialGradient id="gg" cx=".4" cy=".3" r=".8"><stop offset="0" stop-color="#8fd070"/><stop offset="1" stop-color="#2a8a20"/></radialGradient></defs><circle cx="8.5" cy="8.5" r="7.6" fill="url(#gg)" stroke="#3a6a30" stroke-width="1"/><path d="M4.2 6.5 H8.5 V3.8 L13.2 8.5 L8.5 13.2 V10.5 H4.2 Z" fill="#f4f8ff" stroke="#5a6a80" stroke-width=".8"/></svg><div class="hl" style="left:92px;top:679px;width:22px;height:21px"></div><svg class="ic" style="left:95px;top:681px" width="17" height="17" viewBox="0 0 17 17"><defs><radialGradient id="gr" cx=".4" cy=".3" r=".8"><stop offset="0" stop-color="#ff7060"/><stop offset="1" stop-color="#d81010"/></radialGradient></defs><circle cx="8.5" cy="8.5" r="7.6" fill="url(#gr)" stroke="#b02020" stroke-width="1"/><rect x="3.5" y="7" width="10" height="3" fill="#fff"/></svg><div class="sep" style="left:116px;top:681px;height:19px"></div><div class="txt" style="left:122px;top:683px">触发</div><div class="box" style="left:156px;top:679px;width:73px;height:20px"></div><div class="txt" style="left:158px;top:682px;color:#000;font-size:11.5px;letter-spacing:-.3px">自动</div><div class="dd" style="left:212px;top:681px;width:15px;height:16px"><svg width="15" height="16" viewBox="0 0 15 16"><path d="M3.0 5.5 l3.5 4 l3.5 -4" fill="none" stroke="#5e4c40" stroke-width="1.3"/></svg></div><svg class="ic" style="left:230px;top:676px" width="30" height="28" viewBox="0 0 30 28"><rect x="11" y="7" width="7" height="14" fill="#c2d9f8"/><polyline points="5,17.5 8.5,17.5 8.5,10.5 14.5,10.5 14.5,17.5 21,17.5" fill="none" stroke="#000" stroke-width="1" shape-rendering="crispEdges"/><rect x="13" y="13" width="3" height="3" fill="#00dc00"/><path d="M15.8 5 L21 4.8 L20.8 10 Z" fill="#000"/><path d="M19.6 6.2 L16.4 9.4" stroke="#000" stroke-width="1.9"/></svg><div class="sep" style="left:256px;top:681px;height:19px"></div><div class="box" style="left:264px;top:679px;width:74px;height:20px"></div><div class="txt" style="left:269px;top:682px;color:#000;font-size:12px">A</div><div class="dd" style="left:321px;top:681px;width:15px;height:16px"><svg width="15" height="16" viewBox="0 0 15 16"><path d="M3.0 5.5 l3.5 4 l3.5 -4" fill="none" stroke="#5e4c40" stroke-width="1.3"/></svg></div><div class="sep" style="left:343px;top:681px;height:19px"></div><div class="hl" style="left:347px;top:679px;width:22px;height:21px"></div><svg class="ic" style="left:344px;top:676px" width="52" height="28" viewBox="0 0 52 28"><polyline points="7,18.6 8.7,18.6 18.5,8.5 21,8.5" fill="none" stroke="#000" stroke-width="1.2"/><path d="M13.5 7.8 V12 M12 10.5 H15 M13.5 15 V19.2 M12 16.4 H15" stroke="#0000ff" stroke-width="1.2" fill="none"/><polyline points="29.2,8.5 31.5,8.5 41.5,18.6 43,18.6" fill="none" stroke="#000" stroke-width="1.2"/><path d="M36.5 7.8 V12 M35 10.5 H38 M36.5 15 V19.2 M35 16.4 H38" stroke="#0000ff" stroke-width="1.2" fill="none"/></svg><div class="sep" style="left:393px;top:681px;height:19px"></div><div class="box" style="left:400px;top:679px;width:76px;height:20px"></div><div class="txt" style="left:407px;top:682px;font-size:11.5px;letter-spacing:-.5px">2.673 V</div><div class="dd" style="left:459px;top:681px;width:15px;height:16px"><svg width="15" height="16" viewBox="0 0 15 16"><line x1="0" y1="7.0" x2="15" y2="7.0" stroke="#8a7263" stroke-width="1"/><path d="M4 4.3 l2.5 -2.5 l2.5 2.5 M4 9.2 l2.5 2.5 l2.5 -2.5" fill="none" stroke="#5e4c40" stroke-width="1.2"/></svg></div><div class="sep" style="left:481px;top:681px;height:19px"></div><div class="box" style="left:487px;top:679px;width:76px;height:20px"></div><div class="txt" style="left:494px;top:682px;font-size:11.5px;letter-spacing:-.5px">11 %</div><div class="dd" style="left:546px;top:681px;width:15px;height:16px"><svg width="15" height="16" viewBox="0 0 15 16"><line x1="0" y1="7.0" x2="15" y2="7.0" stroke="#8a7263" stroke-width="1"/><path d="M4 4.3 l2.5 -2.5 l2.5 2.5 M4 9.2 l2.5 2.5 l2.5 -2.5" fill="none" stroke="#5e4c40" stroke-width="1.2"/></svg></div><div class="sep" style="left:567px;top:681px;height:19px"></div><div class="txt" style="left:575px;top:683px">测量</div><svg class="ic" style="left:607px;top:681px;" width="15" height="15" viewBox="0 0 15 15"><defs><linearGradient id="gq607" x1="0" y1="0" x2="1" y2="1"><stop offset="0" stop-color="#58c048"/><stop offset="1" stop-color="#0c9c12"/></linearGradient></defs><rect x=".5" y=".5" width="14" height="14" fill="url(#gq607)" stroke="#159015" stroke-width="1"/><path d="M14.5 1 V14.5 H1" fill="none" stroke="#1c3a5c" stroke-width="1"/><rect x="1.5" y="1.5" width="12" height="12" fill="none" stroke="#c8f0b0" stroke-width=".8"/><path d="M3.5 7.5 h8 M7.5 3.5 v8" stroke="#fff" stroke-width="2.6"/></svg><svg class="ic" style="left:629px;top:681px;opacity:.32;" width="15" height="15" viewBox="0 0 15 15"><defs><linearGradient id="gq629" x1="0" y1="0" x2="1" y2="1"><stop offset="0" stop-color="#58c048"/><stop offset="1" stop-color="#0c9c12"/></linearGradient></defs><rect x=".5" y=".5" width="14" height="14" fill="url(#gq629)" stroke="#159015" stroke-width="1"/><path d="M14.5 1 V14.5 H1" fill="none" stroke="#1c3a5c" stroke-width="1"/><rect x="1.5" y="1.5" width="12" height="12" fill="none" stroke="#c8f0b0" stroke-width=".8"/><path d="M3.5 7.5 h8" stroke="#fff" stroke-width="2.6"/></svg><svg class="ic" style="left:651px;top:681px;opacity:.32;" width="15" height="15" viewBox="0 0 15 15"><defs><linearGradient id="gq651" x1="0" y1="0" x2="1" y2="1"><stop offset="0" stop-color="#58c048"/><stop offset="1" stop-color="#0c9c12"/></linearGradient></defs><rect x=".5" y=".5" width="14" height="14" fill="url(#gq651)" stroke="#159015" stroke-width="1"/><path d="M14.5 1 V14.5 H1" fill="none" stroke="#1c3a5c" stroke-width="1"/><rect x="1.5" y="1.5" width="12" height="12" fill="none" stroke="#c8f0b0" stroke-width=".8"/><path d="M2.5 11 L7.5 4.5 L12.5 11 Z" fill="#fff"/></svg><div class="sep" style="left:671px;top:681px;height:19px"></div><div class="txt" style="left:679px;top:683px;font-size:12.5px">Rulers</div><svg class="ic" style="left:723px;top:681px;" width="15" height="15" viewBox="0 0 15 15"><defs><linearGradient id="gq723" x1="0" y1="0" x2="1" y2="1"><stop offset="0" stop-color="#58c048"/><stop offset="1" stop-color="#0c9c12"/></linearGradient></defs><rect x=".5" y=".5" width="14" height="14" fill="url(#gq723)" stroke="#159015" stroke-width="1"/><path d="M14.5 1 V14.5 H1" fill="none" stroke="#1c3a5c" stroke-width="1"/><rect x="1.5" y="1.5" width="12" height="12" fill="none" stroke="#c8f0b0" stroke-width=".8"/><path d="M2.5 11 L7.5 4.5 L12.5 11 Z" fill="#fff"/></svg><div class="txt" style="left:745px;top:683px">说明</div><svg class="ic" style="left:777px;top:681px;" width="15" height="15" viewBox="0 0 15 15"><defs><linearGradient id="gq777" x1="0" y1="0" x2="1" y2="1"><stop offset="0" stop-color="#58c048"/><stop offset="1" stop-color="#0c9c12"/></linearGradient></defs><rect x=".5" y=".5" width="14" height="14" fill="url(#gq777)" stroke="#159015" stroke-width="1"/><path d="M14.5 1 V14.5 H1" fill="none" stroke="#1c3a5c" stroke-width="1"/><rect x="1.5" y="1.5" width="12" height="12" fill="none" stroke="#c8f0b0" stroke-width=".8"/><path d="M2.5 11 L7.5 4.5 L12.5 11 Z" fill="#fff"/></svg><div class="txt" style="left:799px;top:683px;font-size:12.7px;letter-spacing:-.05px">Channel Labels</div><svg class="ic" style="left:894px;top:681px;" width="15" height="15" viewBox="0 0 15 15"><defs><linearGradient id="gq894" x1="0" y1="0" x2="1" y2="1"><stop offset="0" stop-color="#58c048"/><stop offset="1" stop-color="#0c9c12"/></linearGradient></defs><rect x=".5" y=".5" width="14" height="14" fill="url(#gq894)" stroke="#159015" stroke-width="1"/><path d="M14.5 1 V14.5 H1" fill="none" stroke="#1c3a5c" stroke-width="1"/><rect x="1.5" y="1.5" width="12" height="12" fill="none" stroke="#c8f0b0" stroke-width=".8"/><path d="M2.5 11 L7.5 4.5 L12.5 11 Z" fill="#fff"/></svg></div></body></html>
